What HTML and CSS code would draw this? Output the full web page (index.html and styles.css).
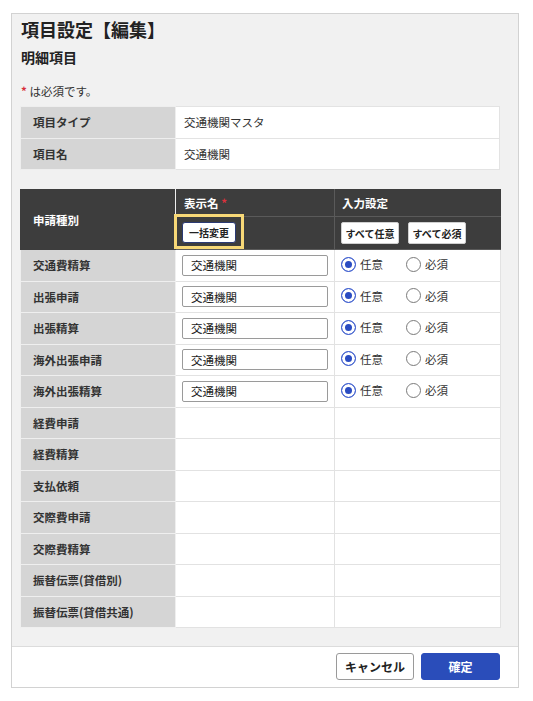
FILE: index.html
```html
<!DOCTYPE html>
<html lang="ja">
<head>
<meta charset="utf-8">
<title>項目設定【編集】</title>
<link rel="stylesheet" href="styles.css">
</head>
<body>
<div class="dialog">
  <div class="panel">
    <h1 class="title">項目設定【編集】</h1>
    <h2 class="subtitle">明細項目</h2>
    <p class="note"><span class="req">*</span> は必須です。</p>

    <table class="info">
      <colgroup><col class="c1"><col class="c2"></colgroup>
      <tr><th>項目タイプ</th><td>交通機関マスタ</td></tr>
      <tr><th>項目名</th><td>交通機関</td></tr>
    </table>

    <table class="grid">
      <colgroup><col class="c1"><col class="c2"><col class="c3"></colgroup>
      <thead>
        <tr class="h1">
          <th rowspan="2" class="hl">申請種別</th>
          <th class="hn">表示名 <span class="req">*</span></th>
          <th class="hs">入力設定</th>
        </tr>
        <tr class="h2">
          <th class="hn2"><span class="hilite"><button class="btn-bulk">一括変更</button></span></th>
          <th class="hs2"><button class="btn-h">すべて任意</button><button class="btn-h">すべて必須</button></th>
        </tr>
      </thead>
      <tbody>
        <tr><th>交通費精算</th><td class="in"><input class="text" value="交通機関"></td><td class="rad"><span class="opt"><span class="radio on"></span>任意</span><span class="opt"><span class="radio"></span>必須</span></td></tr>
        <tr><th>出張申請</th><td class="in"><input class="text" value="交通機関"></td><td class="rad"><span class="opt"><span class="radio on"></span>任意</span><span class="opt"><span class="radio"></span>必須</span></td></tr>
        <tr><th>出張精算</th><td class="in"><input class="text" value="交通機関"></td><td class="rad"><span class="opt"><span class="radio on"></span>任意</span><span class="opt"><span class="radio"></span>必須</span></td></tr>
        <tr><th>海外出張申請</th><td class="in"><input class="text" value="交通機関"></td><td class="rad"><span class="opt"><span class="radio on"></span>任意</span><span class="opt"><span class="radio"></span>必須</span></td></tr>
        <tr><th>海外出張精算</th><td class="in"><input class="text" value="交通機関"></td><td class="rad"><span class="opt"><span class="radio on"></span>任意</span><span class="opt"><span class="radio"></span>必須</span></td></tr>
        <tr><th>経費申請</th><td></td><td></td></tr>
        <tr><th>経費精算</th><td></td><td></td></tr>
        <tr><th>支払依頼</th><td></td><td></td></tr>
        <tr><th>交際費申請</th><td></td><td></td></tr>
        <tr><th>交際費精算</th><td></td><td></td></tr>
        <tr><th>振替伝票(貸借別)</th><td></td><td></td></tr>
        <tr><th>振替伝票(貸借共通)</th><td></td><td></td></tr>
      </tbody>
    </table>
  </div>
  <div class="footer">
    <button class="btn-cancel">キャンセル</button>
    <button class="btn-ok">確定</button>
  </div>
</div>
</body>
</html>
```

FILE: styles.css
```css
* { box-sizing: border-box; }
html, body { margin: 0; padding: 0; background: #fff; }
body {
  font-family: "Noto Sans CJK JP", "Noto Sans", sans-serif;
  color: #333;
  font-size: 12px;
}
.dialog {
  margin: 13px 0 0 11px;
  width: 508px;
  height: 675px;
  border: 1px solid #d2d2d2;
  background: #fff;
  display: flex;
  flex-direction: column;
}
.panel {
  background: #f1f1f1;
  padding: 2px 18px 18px 8px;
  border-bottom: 1px solid #dcdcdc;
}
.title {
  margin: 0 0 0 1px;
  font-size: 18px;
  line-height: 26px;
  font-weight: bold;
  color: #222;
}
.subtitle {
  margin: 5px 0 0 1px;
  font-size: 14px;
  line-height: 20px;
  font-weight: bold;
  color: #222;
}
.note {
  margin: 14px 0 0 1px;
  font-size: 11.5px;
  line-height: 20px;
  color: #333;
}
.req { color: #d8313c; font-weight: bold; }

table { border-collapse: collapse; width: 480px; table-layout: fixed; }
.info { margin-top: 5px; }
.info .c1 { width: 155px; }
.info th, .info td {
  height: 31.5px;
  padding: 0;
  border: 1px solid #eeeeee;
  text-align: left;
  font-size: 11.5px;
}
.info th {
  background: #d5d5d5;
  font-weight: bold;
  padding-left: 12px;
  color: #333;
}
.info td {
  background: #fff;
  padding-left: 8px;
  border-color: #e3e3e3;
}

.grid { margin-top: 19px; }
.grid .c1 { width: 155px; }
.grid .c2 { width: 159px; }
.grid .c3 { width: 166px; }
.grid thead th {
  background: #3d3d3d;
  color: #fff;
  font-weight: bold;
  text-align: left;
  font-size: 11.5px;
  padding: 0;
  border: 1px solid #5a5a5a;
}
.grid thead th.hl { padding-left: 12px; border-color: #3d3d3d #eeeeee #3d3d3d #3d3d3d; }
.grid .h1 th { height: 27px; }
.grid .h1 .hn { padding-left: 8px; border-top-color: #3d3d3d; }
.grid .h1 .hs { padding-left: 7px; border-top-color: #3d3d3d; border-right-color: #3d3d3d; }
.grid .h2 th { height: 33px; }
.grid .h2 .hn2 { padding-left: 0; }
.grid .h2 .hs2 { padding-left: 6px; border-right-color: #3d3d3d; }
.hilite {
  display: inline-block;
  margin-left: -2px;
  margin-top: -3px;
  border: 3px solid #f7d877;
  padding: 5px 5px 3px 5px;
  line-height: 0;
}
.btn-bulk {
  width: 54px;
  height: 21px;
  padding: 0;
  font-family: inherit;
  font-size: 10px;
  font-weight: bold;
  color: #222;
  background: #fff;
  border: 1px solid #2b3a74;
  border-radius: 3px;
}
.btn-h {
  width: 58px;
  height: 22px;
  padding: 0;
  margin-right: 9px;
  font-family: inherit;
  font-size: 10px;
  font-weight: bold;
  color: #222;
  background: #fff;
  border: 1px solid #d0d0d0;
  border-radius: 2px;
  vertical-align: middle;
}
.grid tbody th, .grid tbody td {
  height: 31.5px;
  padding: 0;
  border: 1px solid #e2e2e2;
  text-align: left;
  font-size: 11.5px;
}
.grid tbody th {
  background: #d5d5d5;
  font-weight: bold;
  padding-left: 12px;
  border-color: #efefef;
  color: #333;
}
.grid tbody td { background: #fff; }
.grid tbody td.in { padding-left: 6px; }
.text {
  display: block;
  width: 146px;
  height: 21px;
  padding: 0 0 0 8px;
  border: 1px solid #9a9a9a;
  border-radius: 2px;
  font-family: inherit;
  font-size: 11.5px;
  color: #222;
  background: #fff;
}
.grid tbody td.rad { padding-left: 6px; }
.opt {
  display: inline-flex;
  align-items: center;
  width: 65px;
  font-size: 11.5px;
  color: #333;
}
.radio {
  width: 15px;
  height: 15px;
  border-radius: 50%;
  border: 1px solid #7a7a7a;
  background: #fff;
  margin-right: 4px;
  flex: none;
}
.radio.on {
  border: 1px solid #3b5cd0;
  background: #2a4cc2;
  box-shadow: inset 0 0 0 3px #fff;
}

.footer {
  flex: 1;
  display: flex;
  justify-content: flex-end;
  align-items: flex-start;
  gap: 7px;
  padding: 6px 18px 0 0;
}
.btn-cancel, .btn-ok {
  height: 27px;
  padding: 0;
  font-family: inherit;
  font-size: 12px;
  font-weight: bold;
  border-radius: 3px;
}
.btn-cancel {
  width: 78px;
  background: #fff;
  color: #222;
  border: 1px solid #9a9a9a;
}
.btn-ok {
  width: 79px;
  background: #2a4dba;
  color: #fff;
  border: 1px solid #2a4dba;
}
```
